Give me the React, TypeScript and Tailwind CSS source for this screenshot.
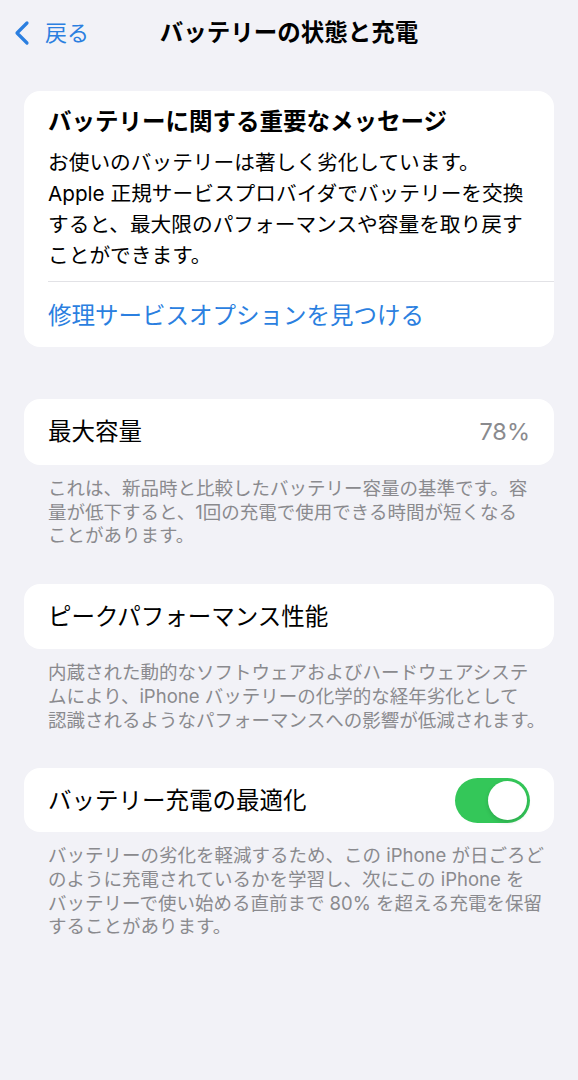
import { useState } from "react";

const Toggle = ({ on, onChange }: { on: boolean; onChange: () => void }) => {
  return (
    <button
      onClick={onChange}
      className={`relative w-[75px] h-[45px] rounded-full shrink-0 ${
        on ? "bg-[#34c759]" : "bg-[#e9e9ea]"
      }`}
    >
      <span
        className={`absolute top-[3px] w-[39px] h-[39px] rounded-full bg-white shadow-[0_2px_4px_rgba(0,0,0,0.15)] ${
          on ? "right-[3px]" : "left-[3px]"
        }`}
      />
    </button>
  );
};

const Footer = ({ lines }: { lines: string[] }) => (
  <p className="px-12 mt-[12px] text-[18.5px] leading-[23.7px] text-[#8a8a8e] whitespace-nowrap">
    {lines.map((l, i) => (
      <span key={i} className="block">
        {l}
      </span>
    ))}
  </p>
);

const App = () => {
  const [optimized, setOptimized] = useState(true);

  return (
    <div className="min-h-[1080px] w-full bg-[#f2f2f7] font-['Inter','Noto_Sans_CJK_JP',sans-serif] text-black">
      {/* nav bar */}
      <div className="relative h-[66px] flex items-center justify-center">
        <button className="absolute left-[12px] top-[18px] flex items-center gap-[13px] text-[#2b7fe0]">
          <svg width="20" height="28" viewBox="0 0 20 28" fill="none">
            <path
              d="M15 4 L5 14 L15 24"
              stroke="currentColor"
              strokeWidth="3.2"
              strokeLinecap="round"
              strokeLinejoin="round"
            />
          </svg>
          <span className="text-[22px] leading-[30px]">戻る</span>
        </button>
        <h1 className="text-[23.5px] font-bold leading-[30px]">
          バッテリーの状態と充電
        </h1>
      </div>

      <div className="px-6 pt-[25px]">
        {/* message card */}
        <div className="bg-white rounded-[16px] pt-[16px] pb-[16px]">
          <div className="px-6">
            <h2 className="text-[23.5px] font-bold leading-[30px]">
              バッテリーに関する重要なメッセージ
            </h2>
            <p className="mt-[10px] text-[20.7px] leading-[31px] whitespace-nowrap">
              <span className="block">お使いのバッテリーは著しく劣化しています。</span>
              <span className="block">Apple 正規サービスプロバイダでバッテリーを交換</span>
              <span className="block">すると、最大限のパフォーマンスや容量を取り戻す</span>
              <span className="block">ことができます。</span>
            </p>
          </div>
          <div className="ml-6 mt-[10px] border-t border-[#e2e2e6]" />
          <div className="px-6 pt-[19px]">
            <a className="text-[23.5px] leading-[30px] text-[#2b7fe0]">
              修理サービスオプションを見つける
            </a>
          </div>
        </div>

        {/* max capacity */}
        <div className="mt-[52px] bg-white rounded-[16px] h-[66px] px-6 flex items-center justify-between">
          <span className="text-[23.5px]">最大容量</span>
          <span className="text-[23.5px] text-[#8a8a8e]">78%</span>
        </div>
      </div>
      <Footer
        lines={[
          "これは、新品時と比較したバッテリー容量の基準です。容",
          "量が低下すると、1回の充電で使用できる時間が短くなる",
          "ことがあります。",
        ]}
      />

      <div className="px-6 mt-[36px]">
        <div className="bg-white rounded-[16px] h-[65px] px-6 flex items-center">
          <span className="text-[23.5px]">ピークパフォーマンス性能</span>
        </div>
      </div>
      <Footer
        lines={[
          "内蔵された動的なソフトウェアおよびハードウェアシステ",
          "ムにより、iPhone バッテリーの化学的な経年劣化として",
          "認識されるようなパフォーマンスへの影響が低減されます。",
        ]}
      />

      <div className="px-6 mt-[36px]">
        <div className="bg-white rounded-[16px] h-[64px] px-6 flex items-center justify-between">
          <span className="text-[23.5px]">バッテリー充電の最適化</span>
          <Toggle on={optimized} onChange={() => setOptimized(!optimized)} />
        </div>
      </div>
      <Footer
        lines={[
          "バッテリーの劣化を軽減するため、この iPhone が日ごろど",
          "のように充電されているかを学習し、次にこの iPhone を",
          "バッテリーで使い始める直前まで 80% を超える充電を保留",
          "することがあります。",
        ]}
      />
    </div>
  );
};

export default App;
